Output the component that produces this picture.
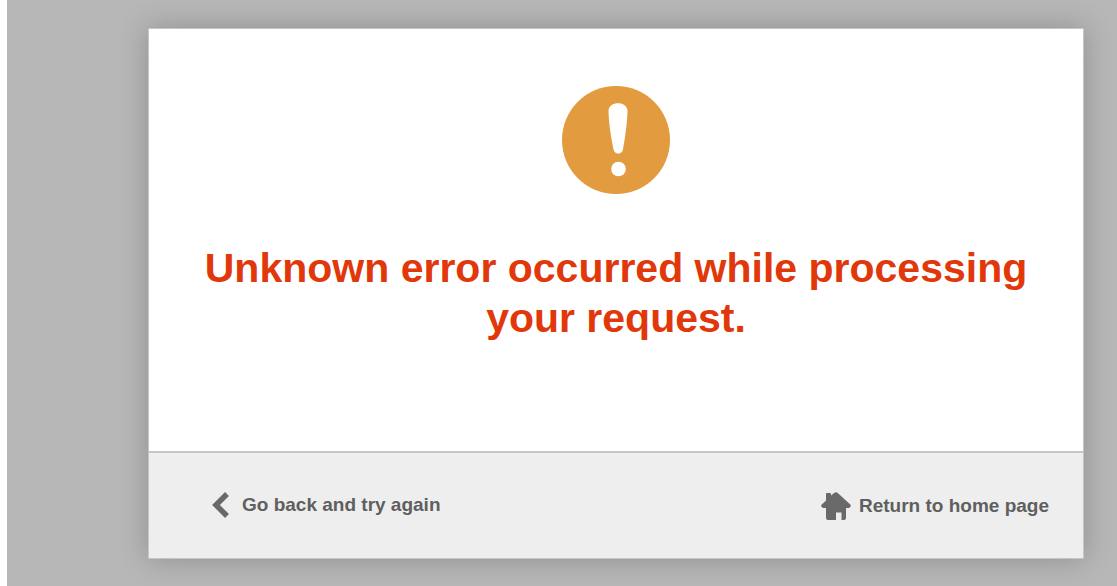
<svelte:head>
  <title>Error</title>
</svelte:head>

<div class="page">
  <main class="card">
    <section class="message">
      <svg class="alert" viewBox="0 0 108 108" aria-hidden="true">
        <circle cx="54" cy="54" r="54" fill="#e39b3f" />
        <path d="M46.500 25C46.500 14.500 65.500 14.500 65.500 25C65.200 38 62.800 53 61 63.500C60 69 52.500 69 51.500 63.500C49.500 53 46.800 38 46.500 25Z" fill="#fff" />
        <circle cx="56.500" cy="83" r="7.300" fill="#fff" />
      </svg>
      <h1>Unknown error occurred while processing your request.</h1>
    </section>
    <footer class="actions">
      <a class="back" href="#back">
        <svg class="chevron" viewBox="0 0 18 26" aria-hidden="true">
          <path d="M15 2L4 13L15 24" fill="none" stroke="#696969" stroke-width="5.500" />
        </svg>
        <span>Go back and try again</span>
      </a>
      <a class="home" href="#home">
        <svg class="house" viewBox="0 0 30 28" aria-hidden="true">
          <path d="M5 2Q5 1 6 1H9Q10 1 10 2V3.500L13.500 0.800Q15 -0.300 16.500 0.800L29.300 12.500Q30.300 14 29 15.200Q28.500 16 27.300 16H25V26Q25 28 23 28H20.500V20.500H15V28H7Q5 28 5 26V16H2.500Q1.500 16 0.800 15Q-0.500 13.500 0.800 12.500L5 8.500Z" fill="#696969" />
        </svg>
        <span>Return to home page</span>
      </a>
    </footer>
  </main>
</div>

<style>
  :global(body) {
    margin: 0;
    background: #fff;
  }

  .page {
    box-sizing: border-box;
    min-height: 100vh;
    margin-left: 7px;
    padding: 28px 33px 27px 141px;
    background: #b7b7b7;
    overflow: hidden;
    font-family: "Liberation Sans", Arial, sans-serif;
    font-weight: bold;
  }

  .card {
    border: 1px solid #c6c6c6;
    background: #fff;
    box-shadow: 0 0 28px rgba(0, 0, 0, 0.22);
  }

  .message {
    display: flex;
    flex-direction: column;
    align-items: center;
    gap: 49px;
    padding: 57px 48px 108px;
  }

  .alert {
    width: 108px;
    height: 108px;
  }

  h1 {
    margin: 0;
    color: #e1380b;
    font-size: 41px;
    line-height: 50px;
    text-align: center;
  }

  .actions {
    display: flex;
    justify-content: space-between;
    align-items: flex-start;
    padding: 38px 34px 37px 63px;
    border-top: 2px solid #c6c6c6;
    background: #eee;
  }

  a {
    display: flex;
    align-items: center;
    color: #5f5f5f;
    font-size: 19px;
    text-decoration: none;
  }

  .back {
    gap: 12px;
    line-height: 28px;
  }

  .home {
    gap: 8px;
    line-height: 30px;
  }

  .chevron {
    width: 18px;
    height: 26px;
  }

  .house {
    width: 30px;
    height: 28px;
  }
</style>
